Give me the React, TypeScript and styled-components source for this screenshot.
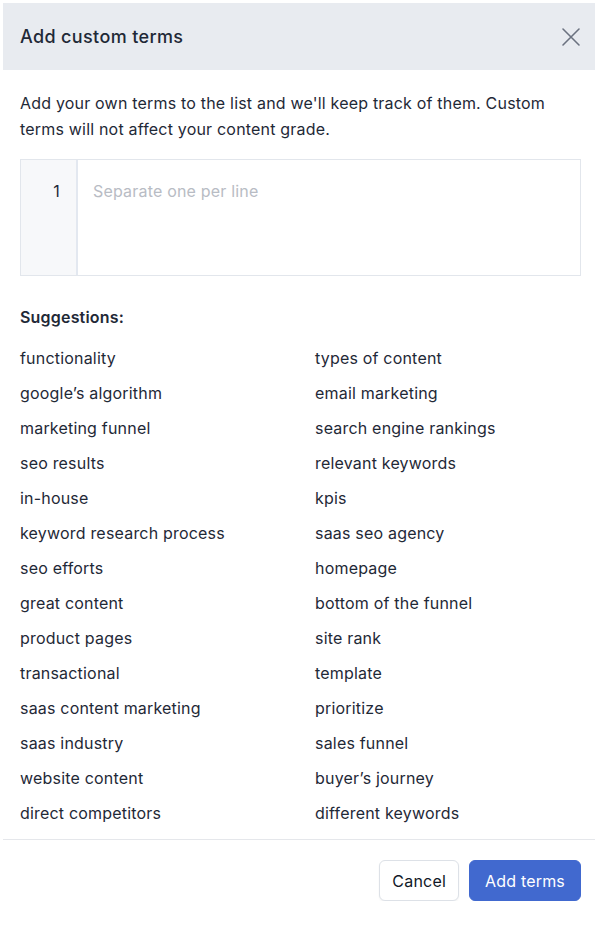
import React from 'react'
import styled, { createGlobalStyle } from 'styled-components'

const GlobalStyle = createGlobalStyle`
    html, body {
        margin: 0;
        padding: 0;
        background: #fff;
    }
    body {
        font-family: Inter, "Noto Sans", sans-serif;
        color: #1f2937;
        letter-spacing: 0.012em;
    }
`

const suggestions: string[] = [
    'functionality', 'types of content',
    'google’s algorithm', 'email marketing',
    'marketing funnel', 'search engine rankings',
    'seo results', 'relevant keywords',
    'in-house', 'kpis',
    'keyword research process', 'saas seo agency',
    'seo efforts', 'homepage',
    'great content', 'bottom of the funnel',
    'product pages', 'site rank',
    'transactional', 'template',
    'saas content marketing', 'prioritize',
    'saas industry', 'sales funnel',
    'website content', 'buyer’s journey',
    'direct competitors', 'different keywords',
]

const Modal = styled.div`
    margin: 3px 3px 0;
    width: 592px;
    background: #fff;
`

const Header = styled.div`
    height: 67px;
    background: #e8ebf0;
    display: flex;
    align-items: center;
    justify-content: space-between;
    padding: 0 12px 0 17px;
`

const Title = styled.h2`
    margin: 0;
    font-size: 18px;
    font-weight: 500;
    letter-spacing: 0.02em;
    color: #1f2937;
`

const CloseButton = styled.button`
    background: none;
    border: none;
    padding: 0;
    width: 24px;
    height: 24px;
    cursor: pointer;
    svg { display: block; }
`

const Body = styled.div`
    padding: 20px 14px 0 17px;
`

const Description = styled.p`
    margin: 0;
    font-size: 16px;
    line-height: 26px;
    color: #1f2937;
`

const Editor = styled.div`
    margin-top: 17px;
    height: 117px;
    border: 1px solid #e2e6ec;
    display: flex;
    box-sizing: border-box;
`

const Gutter = styled.div`
    width: 57px;
    background: #f7f8fa;
    border-right: 2px solid #e3e8f0;
    text-align: right;
    padding: 20px 16px 0 0;
    box-sizing: border-box;
    font-size: 16px;
    color: #1f2937;
    line-height: 22px;
`

const Input = styled.textarea`
    flex: 1;
    border: none;
    outline: none;
    resize: none;
    padding: 20px 14px 0 15px;
    font-family: inherit;
    letter-spacing: inherit;
    font-size: 16px;
    line-height: 22px;
    color: #1f2937;
    &::placeholder { color: #b8bcc4; }
`

const SectionTitle = styled.h3`
    margin: 30px 0 0;
    font-size: 16px;
    font-weight: 600;
    line-height: 22px;
    color: #1f2937;
`

const Grid = styled.ul`
    list-style: none;
    margin: 19px 0 0;
    padding: 0;
    display: grid;
    grid-template-columns: 295px 1fr;
    row-gap: 13px;
`

const Item = styled.li`
    font-size: 16px;
    line-height: 22px;
    color: #1f2937;
`

const Footer = styled.div`
    margin-top: 15px;
    border-top: 1px solid #e5e7eb;
    display: flex;
    justify-content: flex-end;
    gap: 10px;
    padding: 20px 14px 0 0;
`

const Button = styled.button<{ primary?: boolean }>`
    height: 41px;
    padding: 0 ${p => p.primary ? 15 : 12}px;
    border-radius: 6px;
    font-family: inherit;
    letter-spacing: inherit;
    font-size: 16px;
    cursor: pointer;
    border: 1px solid ${p => p.primary ? '#4169cf' : '#dde1e7'};
    background: ${p => p.primary ? '#4169cf' : '#fff'};
    color: ${p => p.primary ? '#fff' : '#111827'};
    box-shadow: ${p => p.primary ? 'none' : '0 1px 2px rgba(0,0,0,0.05)'};
`

export default function App() {
    return (
        <>
            <GlobalStyle />
            <Modal>
                <Header>
                    <Title>Add custom terms</Title>
                    <CloseButton aria-label="Close">
                        <svg width="24" height="24" viewBox="0 0 24 24" fill="none" stroke="#6b7280" strokeWidth="1.6" strokeLinecap="round">
                            <path d="M4 4 L20 20 M20 4 L4 20" />
                        </svg>
                    </CloseButton>
                </Header>
                <Body>
                    <Description>
                        Add your own terms to the list and we'll keep track of them. Custom terms will not affect your content grade.
                    </Description>
                    <Editor>
                        <Gutter>1</Gutter>
                        <Input placeholder="Separate one per line" />
                    </Editor>
                    <SectionTitle>Suggestions:</SectionTitle>
                    <Grid>
                        {suggestions.map((s, i) => <Item key={i}>{s}</Item>)}
                    </Grid>
                </Body>
                <Footer>
                    <Button>Cancel</Button>
                    <Button primary>Add terms</Button>
                </Footer>
            </Modal>
        </>
    )
}
